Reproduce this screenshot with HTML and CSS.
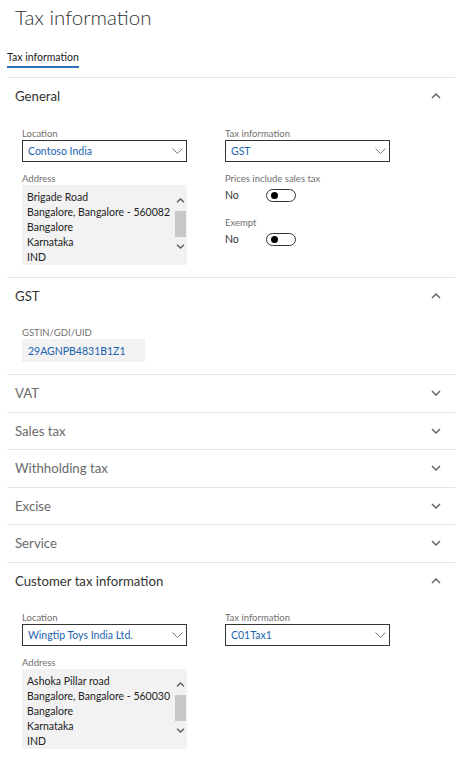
FILE: index.html
```html
<!DOCTYPE html>
<html lang="en">
<head>
<meta charset="utf-8">
<title>Tax information</title>
<link rel="stylesheet" href="styles.css">
</head>
<body>
<div class="page">
  <h1 class="title">Tax information</h1>
  <div class="tabs"><span class="tab active">Tax information</span></div>

  <div class="sections">
    <section class="fasttab open">
      <div class="fasttab-header">
        <span class="fasttab-title">General</span>
        <svg class="chev" width="10" height="6" viewBox="0 0 10 6"><polyline points="1,5 5,1 9,5"/></svg>
      </div>
      <div class="fasttab-body cols">
        <div class="col">
          <div class="field">
            <div class="label">Location</div>
            <div class="select"><span class="value">Contoso India</span><svg class="sel-chev" width="11" height="6" viewBox="0 0 11 6"><polyline points="0.5,0.5 5.5,5.5 10.5,0.5"/></svg></div>
          </div>
          <div class="field">
            <div class="label">Address</div>
            <div class="textarea">
              <div class="lines">
                <div>Brigade Road</div>
                <div>Bangalore, Bangalore - 560082</div>
                <div>Bangalore</div>
                <div>Karnataka</div>
                <div>IND</div>
              </div>
              <div class="scrollbar">
                <svg class="sb-arrow up" width="9" height="5" viewBox="0 0 9 5"><polyline points="1,4.2 4.5,1 8,4.2"/></svg>
                <div class="sb-thumb"></div>
                <svg class="sb-arrow down" width="9" height="5" viewBox="0 0 9 5"><polyline points="1,0.8 4.5,4 8,0.8"/></svg>
              </div>
            </div>
          </div>
        </div>
        <div class="col">
          <div class="field">
            <div class="label">Tax information</div>
            <div class="select"><span class="value">GST</span><svg class="sel-chev" width="11" height="6" viewBox="0 0 11 6"><polyline points="0.5,0.5 5.5,5.5 10.5,0.5"/></svg></div>
          </div>
          <div class="field">
            <div class="label">Prices include sales tax</div>
            <div class="toggle-row"><span class="toggle-text">No</span><span class="toggle"><span class="knob"></span></span></div>
          </div>
          <div class="field">
            <div class="label">Exempt</div>
            <div class="toggle-row"><span class="toggle-text">No</span><span class="toggle"><span class="knob"></span></span></div>
          </div>
        </div>
      </div>
    </section>

    <section class="fasttab open">
      <div class="fasttab-header">
        <span class="fasttab-title">GST</span>
        <svg class="chev" width="10" height="6" viewBox="0 0 10 6"><polyline points="1,5 5,1 9,5"/></svg>
      </div>
      <div class="fasttab-body">
        <div class="field">
          <div class="label">GSTIN/GDI/UID</div>
          <div class="readonly">29AGNPB4831B1Z1</div>
        </div>
      </div>
    </section>

    <section class="fasttab">
      <div class="fasttab-header"><span class="fasttab-title">VAT</span><svg class="chev" width="10" height="6" viewBox="0 0 10 6"><polyline points="1,1 5,5 9,1"/></svg></div>
    </section>
    <section class="fasttab">
      <div class="fasttab-header"><span class="fasttab-title">Sales tax</span><svg class="chev" width="10" height="6" viewBox="0 0 10 6"><polyline points="1,1 5,5 9,1"/></svg></div>
    </section>
    <section class="fasttab">
      <div class="fasttab-header"><span class="fasttab-title">Withholding tax</span><svg class="chev" width="10" height="6" viewBox="0 0 10 6"><polyline points="1,1 5,5 9,1"/></svg></div>
    </section>
    <section class="fasttab">
      <div class="fasttab-header"><span class="fasttab-title">Excise</span><svg class="chev" width="10" height="6" viewBox="0 0 10 6"><polyline points="1,1 5,5 9,1"/></svg></div>
    </section>
    <section class="fasttab">
      <div class="fasttab-header"><span class="fasttab-title">Service</span><svg class="chev" width="10" height="6" viewBox="0 0 10 6"><polyline points="1,1 5,5 9,1"/></svg></div>
    </section>

    <section class="fasttab open">
      <div class="fasttab-header">
        <span class="fasttab-title">Customer tax information</span>
        <svg class="chev" width="10" height="6" viewBox="0 0 10 6"><polyline points="1,5 5,1 9,5"/></svg>
      </div>
      <div class="fasttab-body cols">
        <div class="col">
          <div class="field">
            <div class="label">Location</div>
            <div class="select"><span class="value">Wingtip Toys India Ltd.</span><svg class="sel-chev" width="11" height="6" viewBox="0 0 11 6"><polyline points="0.5,0.5 5.5,5.5 10.5,0.5"/></svg></div>
          </div>
          <div class="field">
            <div class="label">Address</div>
            <div class="textarea">
              <div class="lines">
                <div>Ashoka Pillar road</div>
                <div>Bangalore, Bangalore - 560030</div>
                <div>Bangalore</div>
                <div>Karnataka</div>
                <div>IND</div>
              </div>
              <div class="scrollbar">
                <svg class="sb-arrow up" width="9" height="5" viewBox="0 0 9 5"><polyline points="1,4.2 4.5,1 8,4.2"/></svg>
                <div class="sb-thumb"></div>
                <svg class="sb-arrow down" width="9" height="5" viewBox="0 0 9 5"><polyline points="1,0.8 4.5,4 8,0.8"/></svg>
              </div>
            </div>
          </div>
        </div>
        <div class="col">
          <div class="field">
            <div class="label">Tax information</div>
            <div class="select"><span class="value">C01Tax1</span><svg class="sel-chev" width="11" height="6" viewBox="0 0 11 6"><polyline points="0.5,0.5 5.5,5.5 10.5,0.5"/></svg></div>
          </div>
        </div>
      </div>
    </section>
  </div>
</div>
</body>
</html>
```

FILE: styles.css
```css
* { box-sizing: border-box; }

html, body {
  margin: 0;
  padding: 0;
  background: #ffffff;
}

body {
  font-family: "Lato", "Open Sans", sans-serif;
  color: #333333;
  font-size: 10.5px;
}

.page {
  width: 464px;
  height: 771px;
  overflow: hidden;
}

.title {
  margin: 0;
  padding: 3px 0 0 15px;
  font-size: 20.5px;
  font-weight: 300;
  line-height: 28px;
  color: #333333;
}

.tabs {
  display: flex;
  margin: 19px 0 9px 7px;
}

.tab {
  font-size: 10.5px;
  line-height: 14px;
  padding-bottom: 2px;
  color: #222222;
}

.tab.active {
  border-bottom: 2px solid #2c72b8;
}

.sections {
  margin-left: 7px;
  width: 448px;
  border-top: 1px solid #e3e3e3;
}

.fasttab {
  border-bottom: 1px solid #e3e3e3;
}

.fasttab:last-child {
  border-bottom: none;
}

.fasttab-header {
  height: 36.5px;
  display: flex;
  align-items: center;
  justify-content: space-between;
  padding: 0 14px 0 8px;
}

.fasttab-title {
  font-size: 13.2px;
  color: #6a6a6a;
}

.fasttab.open .fasttab-title {
  color: #333333;
}

.chev polyline {
  fill: none;
  stroke: #666666;
  stroke-width: 1.5;
}

.fasttab-body {
  padding: 12px 0 12px 15px;
}

.cols {
  display: flex;
  gap: 38px;
}

.col {
  width: 165px;
  display: flex;
  flex-direction: column;
  gap: 10px;
}

.label {
  font-size: 9.5px;
  line-height: 13px;
  color: #707070;
}

.select {
  height: 22px;
  border: 1px solid #333333;
  display: flex;
  align-items: center;
  justify-content: space-between;
  padding: 0 3px 0 5px;
}

.value {
  font-size: 10.5px;
  color: #1a63b0;
}

.sel-chev polyline {
  fill: none;
  stroke: #777777;
  stroke-width: 1;
}

.textarea {
  height: 80px;
  background: #f2f2f2;
  display: flex;
  justify-content: space-between;
}

.lines {
  padding: 5px 0 0 5px;
  line-height: 15px;
  font-size: 10.5px;
  color: #222222;
  white-space: nowrap;
}

.scrollbar {
  width: 12px;
  margin-right: 1px;
  display: flex;
  flex-direction: column;
  align-items: center;
  padding-top: 13px;
}

.sb-arrow {
  flex: none;
}

.sb-arrow polyline {
  fill: none;
  stroke: #606060;
  stroke-width: 1.5;
}

.sb-thumb {
  flex: none;
  width: 11px;
  height: 26px;
  margin-top: 8px;
  background: #c8c8c8;
}

.sb-arrow.down {
  margin-top: 7px;
}

.toggle-row {
  height: 21px;
  display: flex;
  align-items: center;
}

.toggle-text {
  width: 41px;
  font-size: 10.5px;
  color: #333333;
}

.toggle {
  width: 30px;
  height: 13px;
  border: 1px solid #333333;
  border-radius: 7px;
  display: flex;
  align-items: center;
  padding-left: 4px;
}

.knob {
  width: 7px;
  height: 7px;
  border-radius: 50%;
  background: #000000;
}

.readonly {
  width: 123px;
  height: 23px;
  background: #f2f2f2;
  display: flex;
  align-items: center;
  padding-left: 6px;
  font-size: 10.5px;
  color: #1a63b0;
}
```
